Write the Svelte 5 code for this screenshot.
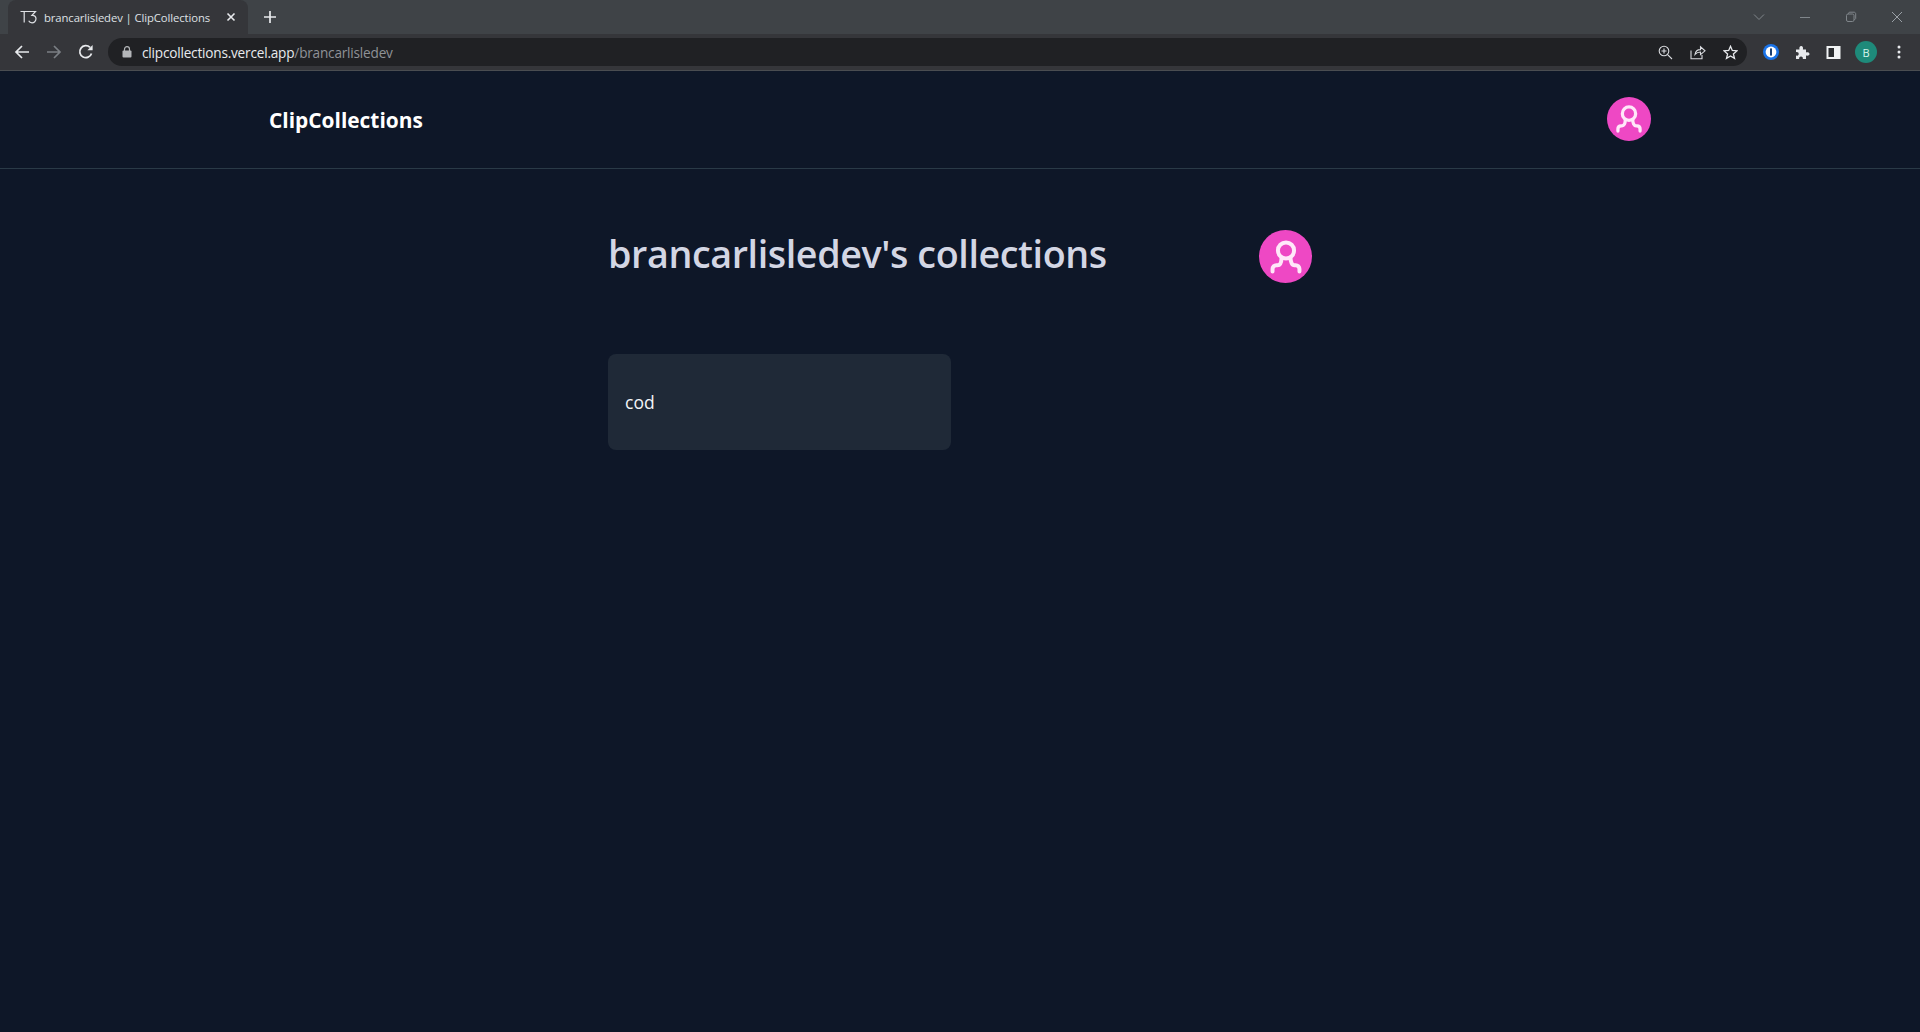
<script>
    const tabTitle = "brancarlisledev | ClipCollections";
    const username = "brancarlisledev";
    const collections = ["cod"];
</script>

<div class="window">
    <div class="tabstrip">
        <div class="tab">
            <svg class="favicon" width="17" height="14" viewBox="0 0 17 14" fill="none" stroke="#dfe1e5" stroke-width="1.2">
                <path d="M0.5 1.5H8M4.2 1.5V12.5M8 1.5H15.5L12 5.4C14.6 5.2 16 6.8 16 8.8C16 11.2 14 12.8 12 12.8C10.4 12.8 9.3 12 8.7 10.8" />
            </svg>
            <span class="tab-title">{tabTitle}</span>
            <svg class="tab-close" width="10" height="10" viewBox="0 0 10 10" stroke="#e8eaed" stroke-width="1.6">
                <path d="M1.5 1.5L8.5 8.5M8.5 1.5L1.5 8.5" />
            </svg>
        </div>
        <svg class="new-tab" width="12" height="12" viewBox="0 0 12 12" stroke="#e8eaed" stroke-width="1.7">
            <path d="M6 0V12M0 6H12" />
        </svg>
        <div class="window-controls">
            <svg width="12" height="12" viewBox="0 0 12 12" fill="none" stroke="#80868b" stroke-width="1"><path d="M1 3.5L6 8.5L11 3.5" /></svg>
            <svg width="12" height="12" viewBox="0 0 12 12" fill="none" stroke="#80868b" stroke-width="1"><path d="M1 6.5H11" /></svg>
            <svg width="12" height="12" viewBox="0 0 12 12" fill="none" stroke="#80868b" stroke-width="1"><rect x="1.5" y="3" width="7.5" height="7.5" rx="1.5" /><path d="M3.5 3V2.5C3.5 1.7 4 1.2 4.8 1.2H9C10 1.2 10.7 1.9 10.7 2.9V7.2C10.7 8 10.2 8.5 9 8.5" /></svg>
            <svg width="12" height="12" viewBox="0 0 12 12" fill="none" stroke="#9aa0a6" stroke-width="1"><path d="M1 1L11 11M11 1L1 11" /></svg>
        </div>
    </div>

    <div class="toolbar">
        <svg class="nav" width="16" height="16" viewBox="0 0 16 16" fill="none" stroke="#e8eaed" stroke-width="1.7"><path d="M15 8H2M8 2L2 8L8 14" /></svg>
        <svg class="nav" width="16" height="16" viewBox="0 0 16 16" fill="none" stroke="#7b7f84" stroke-width="1.7"><path d="M1 8H14M8 2L14 8L8 14" /></svg>
        <svg class="nav" width="16" height="16" viewBox="0 0 16 16" fill="none" stroke="#e8eaed" stroke-width="1.8"><path d="M13.5 9.5A6 6 0 1 1 12 3.4" /><path d="M14.6 1V6.2H9.4Z" fill="#e8eaed" stroke="none" /></svg>
        <div class="omnibox">
            <svg width="10" height="12" viewBox="0 0 10 12" fill="#b4b6b9"><rect x="0.5" y="4.5" width="9" height="7" rx="1" /><path d="M2.5 5V3.2a2.5 2.5 0 0 1 5 0V5" fill="none" stroke="#b4b6b9" stroke-width="1.2" /></svg>
            <span class="url"><span class="host">clipcollections.vercel.app</span><span class="path">/{username}</span></span>
            <div class="omni-actions">
                <svg width="15" height="15" viewBox="0 0 15 15" fill="none" stroke="#dadce0" stroke-width="1.1"><circle cx="6" cy="6" r="4.8" /><path d="M9.6 9.6L14 14M6 3.5V8.5M3.5 6H8.5" /></svg>
                <svg width="16" height="15" viewBox="0 0 16 15" fill="none" stroke="#dadce0" stroke-width="1.1"><path d="M1 5.5V13.8H12V10M5 9.5C5.5 6.5 8 4.6 10.5 4.6V1.8L15 5.8L10.5 9.6V7C8.5 7 6.5 7.8 5 9.5Z" /></svg>
                <svg width="15" height="15" viewBox="0 0 15 15" fill="none" stroke="#e8eaed" stroke-width="1.3"><path d="M7.5 1.3L9.3 5.5L13.9 5.9L10.4 8.9L11.5 13.4L7.5 11L3.5 13.4L4.6 8.9L1.1 5.9L5.7 5.5Z" /></svg>
            </div>
        </div>
        <div class="extensions">
            <svg width="16" height="16" viewBox="0 0 16 16"><circle cx="8" cy="8" r="8" fill="#1a73e8" /><circle cx="8" cy="8" r="5.4" fill="#fff" /><rect x="7" y="4.2" width="2" height="7.6" rx="0.8" fill="#1d3f72" /></svg>
            <svg width="15" height="15" viewBox="0 0 15 15" fill="#e8eaed"><path d="M1 4.5H4.5C4 2.5 4.8 1 6.2 1C7.6 1 8.4 2.5 7.9 4.5H11V7.4C13 7 14.5 7.6 14.5 9C14.5 10.4 13 11 11 10.6V14H7.8C8.2 12.4 7.4 11.4 6 11.4C4.6 11.4 3.8 12.4 4.2 14H1V10.6C2.6 11 3.7 10.2 3.7 8.9C3.7 7.6 2.6 6.8 1 7.2Z" /></svg>
            <svg width="15" height="15" viewBox="0 0 15 15"><rect x="0.5" y="1" width="14" height="13" fill="#f1f3f4" /><rect x="2.5" y="3" width="5.5" height="9" fill="#2b2d30" /></svg>
            <div class="profile">B</div>
            <svg class="kebab" width="4" height="14" viewBox="0 0 4 14" fill="#e8eaed"><circle cx="2" cy="2" r="1.5" /><circle cx="2" cy="7" r="1.5" /><circle cx="2" cy="12" r="1.5" /></svg>
        </div>
    </div>

    <div class="page">
        <header class="site-header">
            <div class="header-inner">
                <span class="logo">ClipCollections</span>
                <div class="avatar small">
                    <svg viewBox="0 0 24 24" fill="none" stroke="#ffe8f9" stroke-width="2.8" stroke-linecap="round" stroke-linejoin="round">
                        <circle cx="12" cy="7.4" r="5.7" />
                        <path d="M2.5 22.3V20.5C2.5 18.8 3.7 17.8 5.2 17.8H6C7.8 17.8 8.8 15.5 8.8 12.5M21.5 22.3V20.5C21.5 18.8 20.3 17.8 18.8 17.8H18C16.2 17.8 15.2 15.5 15.2 12.5" />
                    </svg>
                </div>
            </div>
        </header>

        <main class="content">
            <div class="title-row">
                <h1>{username}'s collections</h1>
                <div class="avatar large">
                    <svg viewBox="0 0 24 24" fill="none" stroke="#ffe8f9" stroke-width="2.8" stroke-linecap="round" stroke-linejoin="round">
                        <circle cx="12" cy="7.4" r="5.7" />
                        <path d="M2.5 22.3V20.5C2.5 18.8 3.7 17.8 5.2 17.8H6C7.8 17.8 8.8 15.5 8.8 12.5M21.5 22.3V20.5C21.5 18.8 20.3 17.8 18.8 17.8H18C16.2 17.8 15.2 15.5 15.2 12.5" />
                    </svg>
                </div>
            </div>
            <div class="grid">
                {#each collections as name}
                    <div class="card">{name}</div>
                {/each}
            </div>
        </main>
    </div>
</div>

<style>
    :global(body) {
        margin: 0;
        background: #0e1728;
    }
    .window {
        display: flex;
        flex-direction: column;
        height: 1032px;
        overflow: hidden;
        font-family: "Open Sans", "Noto Sans", sans-serif;
    }
    .tabstrip {
        display: flex;
        align-items: flex-end;
        height: 34px;
        flex: none;
        background: #3f4347;
        padding-left: 8px;
    }
    .tab {
        display: flex;
        align-items: center;
        box-sizing: border-box;
        width: 240px;
        height: 34px;
        padding: 0 12px;
        background: #35363a;
        border-radius: 8px 8px 0 0;
    }
    .tab-title {
        margin-left: 7px;
        flex: 1;
        font-size: 11.3px;
        letter-spacing: -0.1px;
        color: #dfe1e5;
        white-space: nowrap;
    }
    .new-tab {
        margin: 0 0 11px 16px;
    }
    .window-controls {
        display: flex;
        gap: 34px;
        margin-left: auto;
        padding-right: 17px;
        align-self: center;
    }
    .toolbar {
        display: flex;
        align-items: center;
        height: 36px;
        flex: none;
        background: #35363a;
        border-bottom: 1px solid #4a4d51;
        padding-left: 14px;
        gap: 16px;
    }
    .nav {
        flex: none;
    }
    .omnibox {
        display: flex;
        align-items: center;
        flex: 1;
        height: 28px;
        margin-left: -2px;
        padding: 0 9px 0 14px;
        background: #202124;
        border-radius: 14px;
    }
    .url {
        margin-left: 10px;
        font-size: 13.6px;
        letter-spacing: -0.2px;
    }
    .host {
        color: #e8eaed;
    }
    .path {
        color: #8f9297;
    }
    .omni-actions {
        display: flex;
        align-items: center;
        gap: 17px;
        margin-left: auto;
    }
    .extensions {
        display: flex;
        align-items: center;
        gap: 16px;
        padding-right: 19px;
    }
    .profile {
        display: flex;
        align-items: center;
        justify-content: center;
        width: 22px;
        height: 22px;
        margin-left: -2px;
        border-radius: 50%;
        background: #1e8a7a;
        color: #d6f5ee;
        font-size: 11px;
    }
    .kebab {
        margin-left: 4px;
    }
    .page {
        flex: 1;
        background: #0e1728;
    }
    .site-header {
        border-bottom: 1px solid #2a3a47;
    }
    .header-inner {
        display: flex;
        align-items: center;
        justify-content: space-between;
        box-sizing: border-box;
        height: 97px;
        width: 1382px;
        margin: 0 auto;
    }
    .logo {
        font-size: 20.9px;
        font-weight: 700;
        color: #fff;
    }
    .avatar {
        display: flex;
        align-items: center;
        justify-content: center;
        flex: none;
        border-radius: 50%;
        background: #ee48c4;
    }
    .avatar.small {
        width: 44px;
        height: 44px;
        margin-bottom: 2px;
    }
    .avatar.small svg {
        width: 28px;
        height: 28px;
    }
    .avatar.large {
        width: 53px;
        height: 53px;
    }
    .avatar.large svg {
        width: 34px;
        height: 34px;
    }
    .content {
        width: 704px;
        margin: 0 auto;
    }
    .title-row {
        display: flex;
        align-items: center;
        justify-content: space-between;
        padding-top: 61px;
    }
    h1 {
        margin: -3px 0 3px;
        font-size: 37.7px;
        font-weight: 600;
        line-height: 44px;
        color: #d3d6e4;
        letter-spacing: -0.4px;
    }
    .grid {
        margin-top: 71px;
        display: grid;
        grid-template-columns: 343px;
    }
    .card {
        display: flex;
        align-items: center;
        box-sizing: border-box;
        height: 96px;
        padding-left: 17px;
        background: #1f2937;
        border-radius: 8px;
        font-size: 17.5px;
        color: #f3f4f6;
    }
</style>
